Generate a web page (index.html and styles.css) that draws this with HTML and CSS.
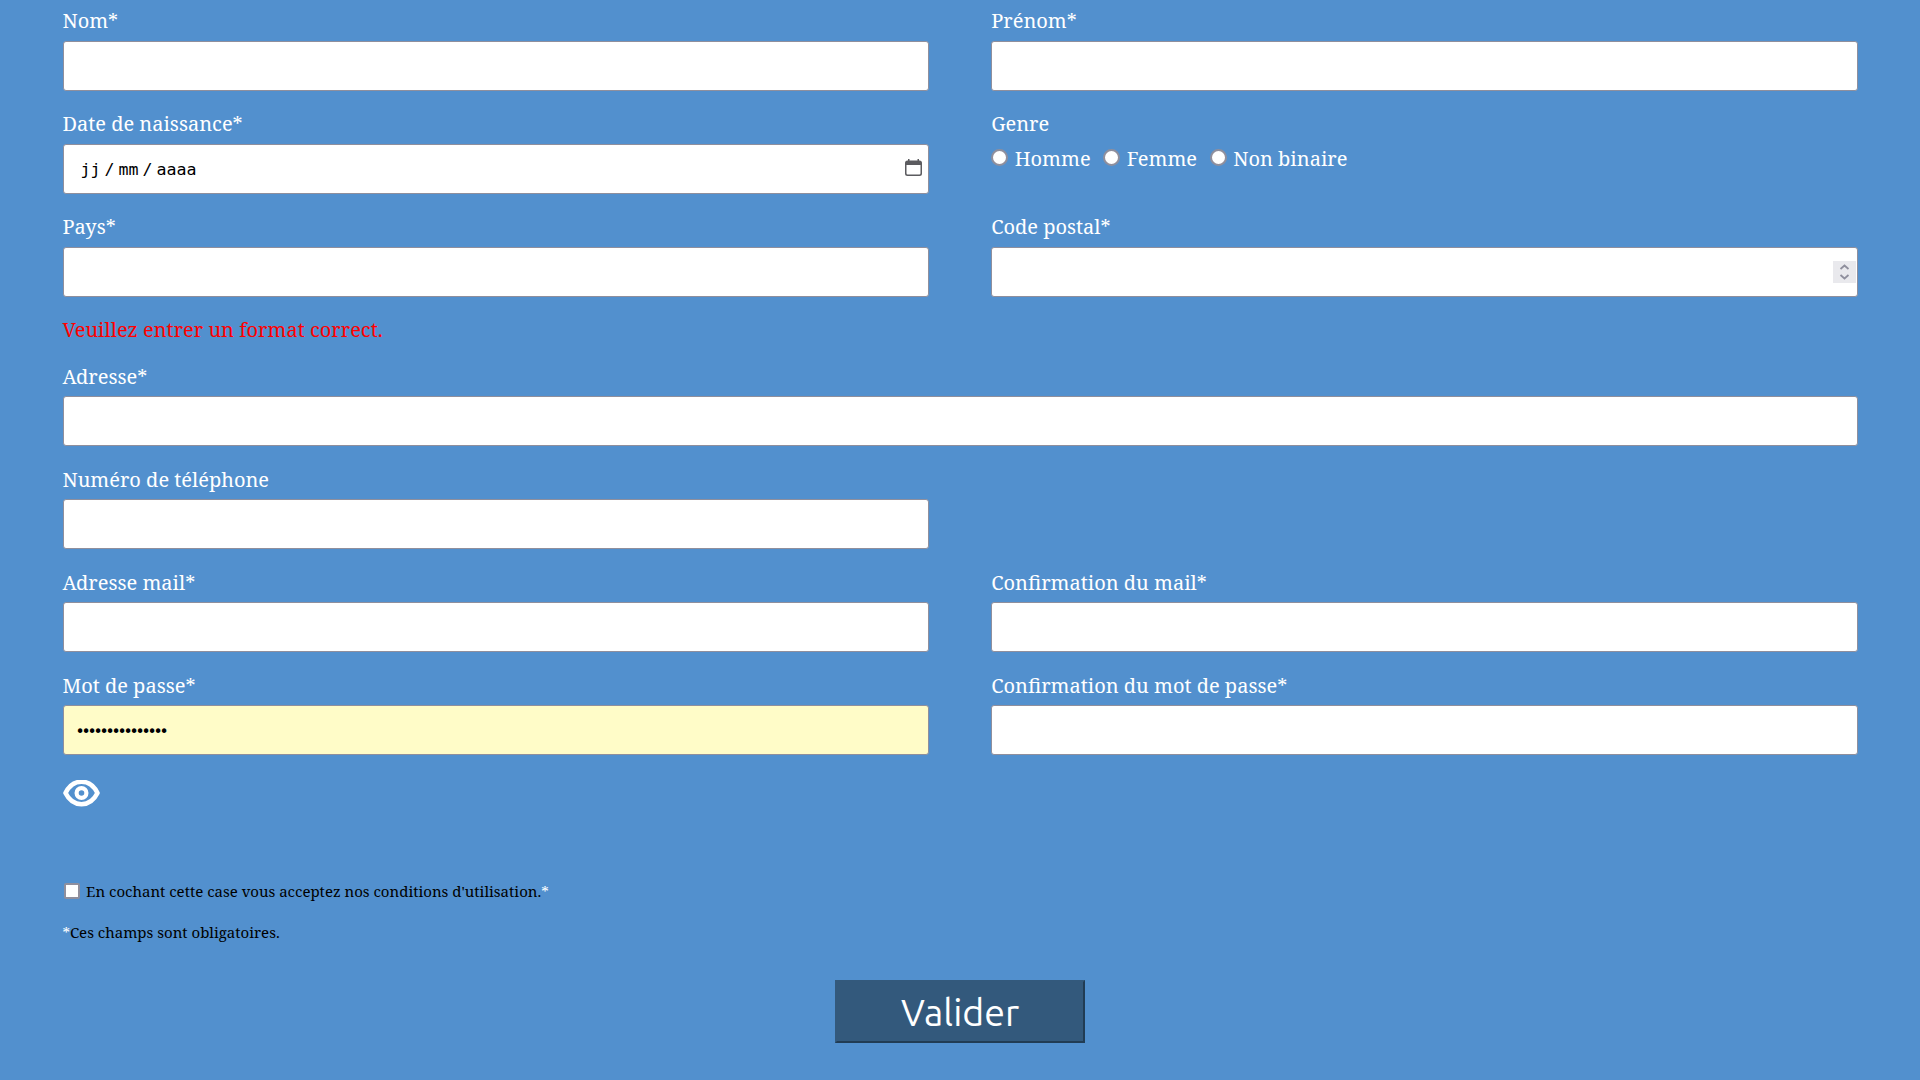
FILE: index.html
```html
<!DOCTYPE html>
<html lang="fr">
<head>
<meta charset="utf-8">
<title>Inscription</title>
<link rel="stylesheet" href="styles.css">
</head>
<body>
<form class="form">
  <div class="grid">
    <div class="field"><label class="label"><span>Nom*</span></label><div class="input"></div></div>
    <div class="field"><label class="label"><span>Prénom*</span></label><div class="input"></div></div>
    <div class="field"><label class="label"><span>Date de naissance*</span></label>
      <div class="input date"><span class="part">jj</span><span class="part slash">/</span><span class="part">mm</span><span class="part slash">/</span><span class="part">aaaa</span>
        <svg class="calendar" width="17" height="17" viewBox="0 0 17 17"><path d="M2.500 1.500h12Q17 1.500 17 4v10.500Q17 17 14.500 17h-12Q0 17 0 14.500V4Q0 1.500 2.500 1.500zM1.500 6v8.300q0 1.200 1.200 1.200h11.600q1.200 0 1.200-1.200V6z" fill="#5b5b5f" fill-rule="evenodd"/><path d="M3 0h1.500v3H3zM12.500 0H14v3h-1.500z" fill="#5b5b5f"/></svg>
      </div>
    </div>
    <div class="field"><label class="label"><span>Genre</span></label>
      <div class="radios">
        <label class="choice"><i class="radio"></i><span>Homme</span></label>
        <label class="choice"><i class="radio"></i><span>Femme</span></label>
        <label class="choice"><i class="radio"></i><span>Non binaire</span></label>
      </div>
    </div>
    <div class="field"><label class="label"><span>Pays*</span></label><div class="input"></div></div>
    <div class="field"><label class="label"><span>Code postal*</span></label>
      <div class="input number"><div class="spinner"><svg width="23" height="22" viewBox="0 0 23 22"><path d="M7.500 8L11.500 4.500 15.500 8M7.500 14L11.500 17.500 15.500 14" fill="none" stroke="#8f8f9d" stroke-width="1.800"/></svg></div></div>
    </div>
    <p class="error wide"><span>Veuillez entrer un format correct.</span></p>
    <div class="field low wide"><label class="label"><span>Adresse*</span></label><div class="input"></div></div>
    <div class="field low"><label class="label"><span>Numéro de téléphone</span></label><div class="input"></div></div>
    <div></div>
    <div class="field low"><label class="label"><span>Adresse mail*</span></label><div class="input"></div></div>
    <div class="field low"><label class="label"><span>Confirmation du mail*</span></label><div class="input"></div></div>
    <div class="field low"><label class="label"><span>Mot de passe*</span></label><div class="input filled"><span class="dots">•••••••••••••••</span></div></div>
    <div class="field low"><label class="label"><span>Confirmation du mot de passe*</span></label><div class="input"></div></div>
  </div>
  <svg class="eye" width="37" height="27" viewBox="0 0 37 27"><path d="M2.500 13C10-2 27-2 34.500 13C27 28 10 28 2.500 13Z" fill="none" stroke="#fff" stroke-width="4.600" stroke-linejoin="round"/><circle cx="18.500" cy="13" r="4.900" fill="none" stroke="#fff" stroke-width="4.200"/></svg>
  <div class="terms"><i class="checkbox"></i><span class="small">En cochant cette case vous acceptez nos conditions d'utilisation.<span class="star">*</span></span></div>
  <p class="small note"><span class="star">*</span>Ces champs sont obligatoires.</p>
  <button class="submit" type="button"><span>Valider</span></button>
</form>
</body>
</html>
```
FILE: styles.css
```css
* { box-sizing: border-box; }
html, body { height: 100%; }
body {
  margin: 0;
  overflow: hidden;
  background: #5290ce;
  color: #fff;
  font: 20px/28px "Noto Serif", "Droid Serif", "DejaVu Serif", serif;
}
p { margin: 0; }
.form { display: flex; flex-direction: column; padding: 7px 62.400px 0; }
.grid { display: grid; grid-template-columns: 1fr 1fr; column-gap: 62.400px; row-gap: 23px; }
.wide { grid-column: 1 / -1; }
.field { height: 80px; }
.label { display: block; height: 34px; white-space: nowrap; }
.low .label { height: 33px; margin-top: 1px; }
.input {
  display: flex;
  align-items: center;
  height: 50px;
  margin-left: 0.200px;
  border: 1px solid #8f8f9d;
  border-radius: 3px;
  background: #fff;
  color: #000;
}
.date { padding: 2px 6px 0 17px; font: 16.600px/20px "DejaVu Sans Mono", monospace; }
.slash { width: 18px; text-align: center; }
.calendar { margin-left: auto; margin-top: -5px; }
.radios { display: flex; gap: 12.700px; margin-top: 1px; }
.choice { display: flex; align-items: center; height: 28px; white-space: nowrap; }
.radio { width: 17px; height: 17px; margin: -3px 6.500px 0 0; border: 2px solid #8f8f9d; border-radius: 50%; background: #fff; }
.number { justify-content: flex-end; padding-right: 1px; }
.spinner { display: flex; width: 23px; height: 22px; background: #e9e9ed; }
.error { height: 23px; color: #f00; }
.filled { padding: 3px 0 0 12px; background: #fffcc8; }
.dots { font: 15.500px/20px "DejaVu Sans", sans-serif; letter-spacing: -3.150px; }
.eye { display: block; margin: 29px 0 0 0.600px; }
.terms { display: flex; align-items: center; height: 24px; margin-top: 72px; }
.checkbox { width: 16px; height: 16px; margin: -1px 6.500px 0 1.200px; border: 2px solid #8f8f9d; border-radius: 2px; background: #fff; }
.small { font-size: 15px; line-height: 24px; color: #000; white-space: nowrap; }
.star { color: #fff; }
.note { margin-top: 17px; }
.submit {
  align-self: center;
  width: 250px;
  height: 63px;
  margin-top: 36px;
  padding: 2px 0 0;
  border: 2px solid;
  border-color: #33597c #213c54 #213c54 #33597c;
  background: #33597c;
  color: #fff;
  font: 400 37.500px/57px Ubuntu, "Open Sans", "Noto Sans", sans-serif;
}
```
